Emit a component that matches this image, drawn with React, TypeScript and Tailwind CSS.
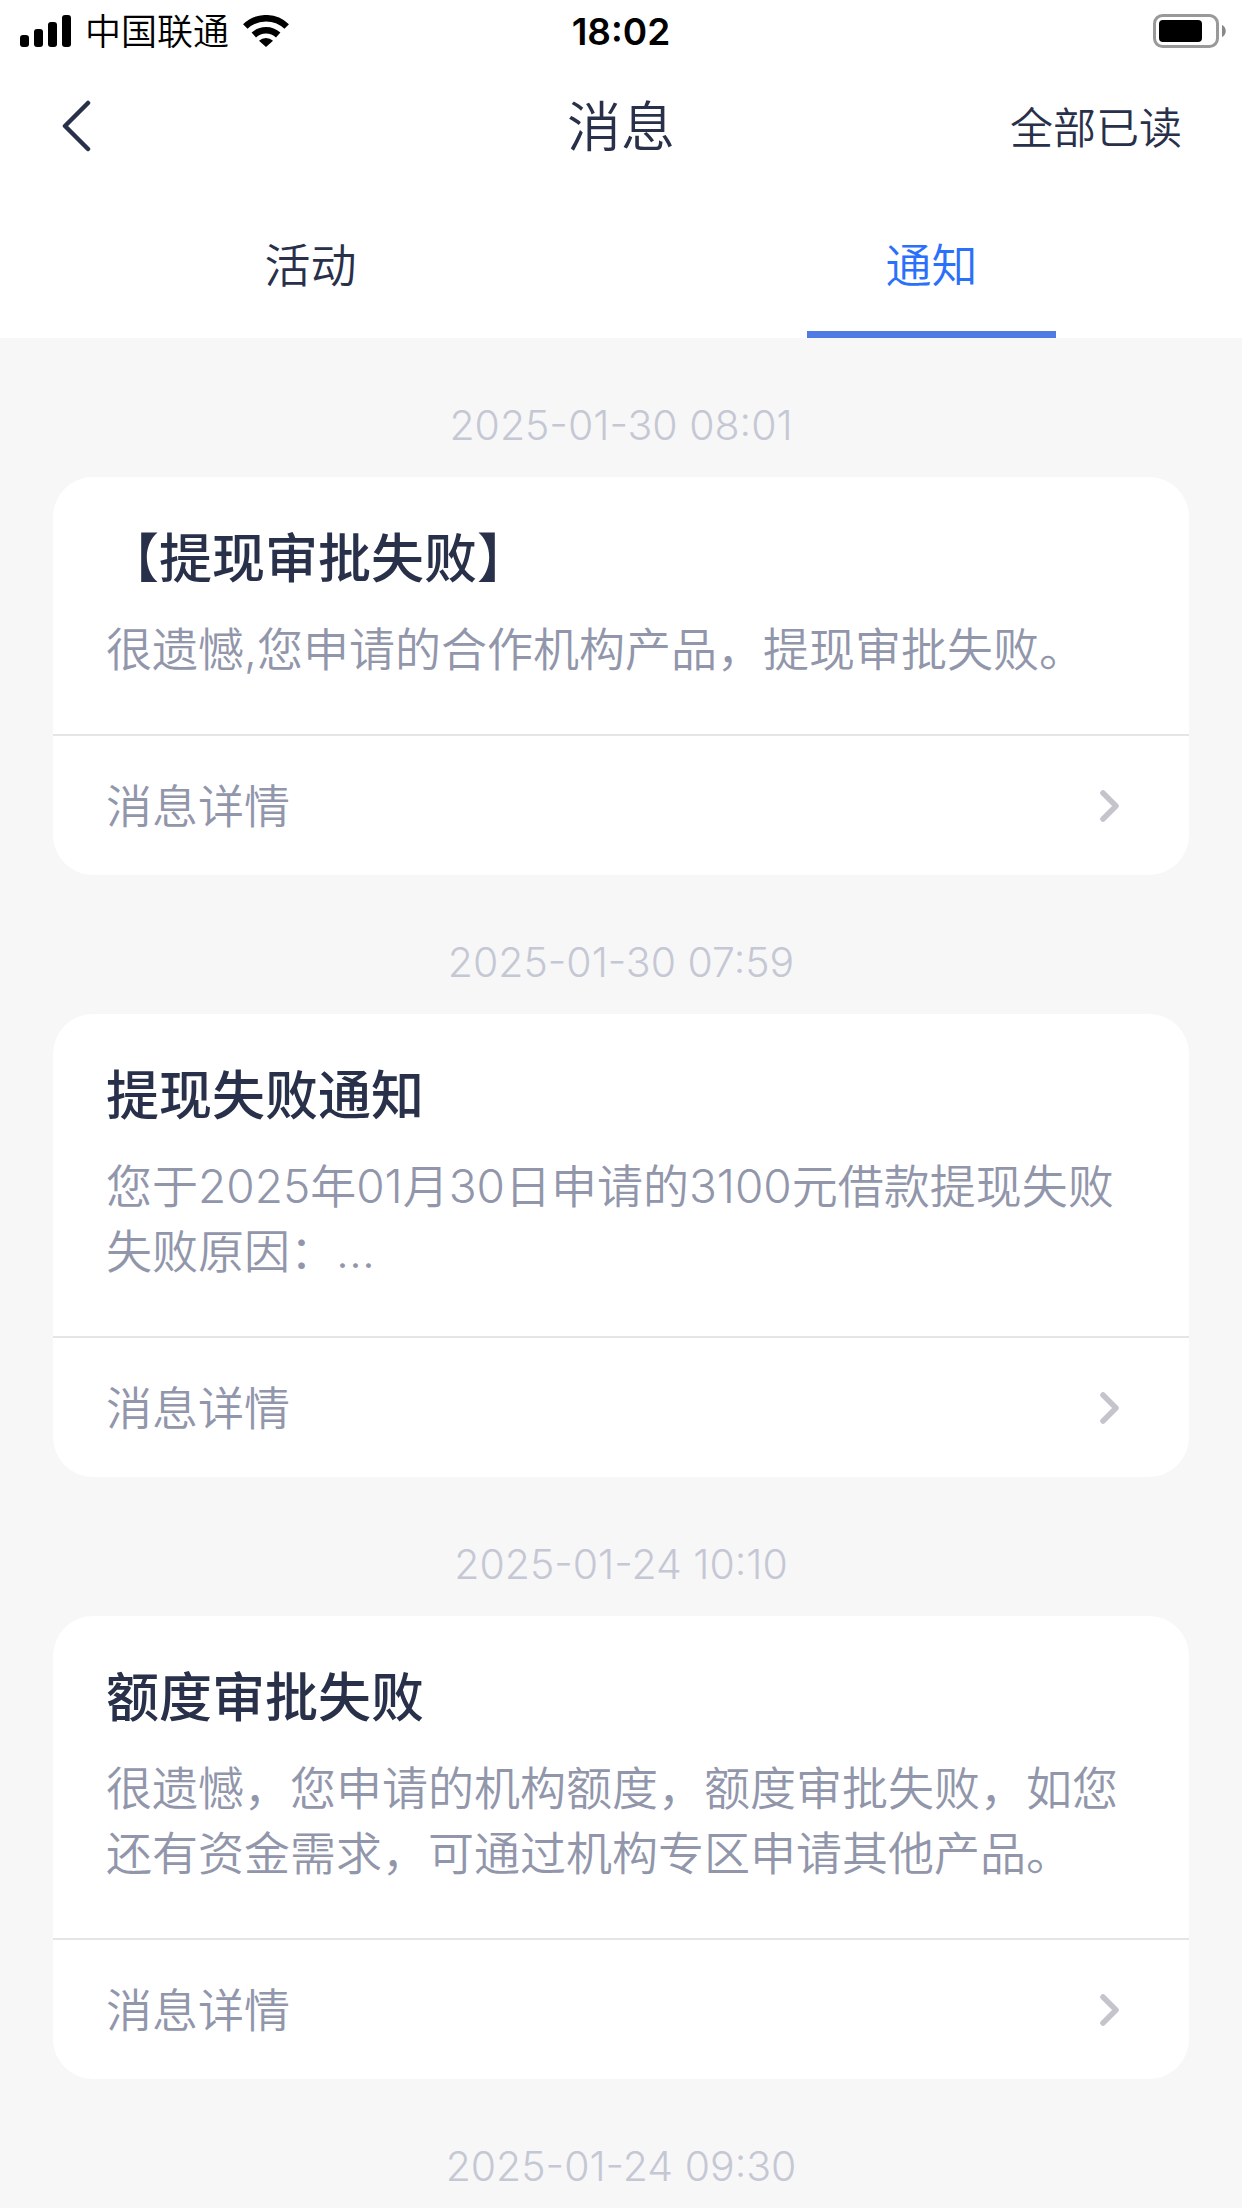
import { useState } from 'react';

type Message = {
  time: string;
  title: string;
  body: string;
};

const tabs = ['活动', '通知'];

const messages: Message[] = [
  {
    time: '2025-01-30 08:01',
    title: '【提现审批失败】',
    body: '很遗憾,您申请的合作机构产品，提现审批失败。',
  },
  {
    time: '2025-01-30 07:59',
    title: '提现失败通知',
    body: '您于2025年01月30日申请的3100元借款提现失败\n失败原因：…',
  },
  {
    time: '2025-01-24 10:10',
    title: '额度审批失败',
    body: '很遗憾，您申请的机构额度，额度审批失败，如您还有资金需求，可通过机构专区申请其他产品。',
  },
];

function StatusBar() {
  return (
    <div className="grid h-[62px] grid-cols-3 items-center px-4 text-black">
      <div className="flex items-center pl-1">
        <svg className="h-8 w-[51px]" viewBox="0 0 51 32" fill="currentColor">
          <rect x="0" y="20" width="9" height="12" rx="3" />
          <rect x="14" y="14" width="9" height="18" rx="3" />
          <rect x="28" y="7" width="9" height="25" rx="3" />
          <rect x="42" y="0" width="9" height="32" rx="3" />
        </svg>
        <span className="ml-3.5 pt-0.5 text-[36px] leading-none">中国联通</span>
        <svg className="ml-3.5 h-8 w-[46px]" viewBox="0 0 46 32" fill="none" stroke="currentColor" strokeWidth="6.5">
          <path d="M2.3 11.5A30 30 0 0 1 43.7 11.5" />
          <path d="M10.8 20A18 18 0 0 1 35.2 20" />
          <path d="M16 25.8A10 10 0 0 1 30 25.8L23 32Z" fill="currentColor" stroke="none" />
        </svg>
      </div>
      <span className="text-center font-[Inter] text-[37px] leading-none font-semibold">18:02</span>
      <svg className="h-[34px] w-[73px] justify-self-end" viewBox="0 0 73 34">
        <rect x="1.5" y="1.5" width="63" height="31" rx="8" fill="none" stroke="#999" strokeWidth="3" />
        <rect x="6" y="6" width="43" height="22" rx="4" fill="#000" />
        <path d="M69 11C74 13 74 21 69 23Z" fill="#888" />
      </svg>
    </div>
  );
}

function NavBar() {
  return (
    <div className="grid h-[128px] grid-cols-3 items-center px-[60px]">
      <button type="button" aria-label="返回" className="justify-self-start">
        <svg className="h-[52px] w-8" viewBox="0 0 32 52" fill="none" stroke="currentColor" strokeWidth="4.5" strokeLinecap="round" strokeLinejoin="round">
          <path d="M28 3L5 26L28 49" />
        </svg>
      </button>
      <h1 className="pt-1 text-center text-[54px] leading-none">消息</h1>
      <button type="button" className="justify-self-end pt-1 text-[43px] leading-none">
        全部已读
      </button>
    </div>
  );
}

function Timestamp({ value }: { value: string }) {
  return (
    <time className="flex h-[139px] items-center justify-center pt-9 font-[Inter] text-[41px] leading-none font-light text-[#c5c8d4]">
      {value}
    </time>
  );
}

function MessageCard({ message }: { message: Message }) {
  return (
    <article>
      <Timestamp value={message.time} />
      <div className="overflow-hidden rounded-[40px] bg-white">
        <div className="px-[53px] pt-[42px] pb-[52px]">
          <h2 className="text-[53px] leading-[80px] font-medium text-[#28304a]">{message.title}</h2>
          <p className="mt-[18px] text-[46px] leading-[65px] whitespace-pre-line text-[#9196ab]">{message.body}</p>
        </div>
        <a href="#detail" className="flex h-[141px] items-center justify-between border-t-2 border-[#e5e5e7] pr-[67px] pl-[53px] text-[46px] leading-none text-[#9196ab]">
          消息详情
          <svg className="h-9 w-6" viewBox="0 0 24 36" fill="none" stroke="#c3c4cc" strokeWidth="5.5" strokeLinecap="round" strokeLinejoin="round">
            <path d="M5 5L18 18L5 31" />
          </svg>
        </a>
      </div>
    </article>
  );
}

export default function App() {
  const [active, setActive] = useState('通知');

  return (
    <div className="flex h-screen flex-col overflow-hidden bg-[#f7f7f7] font-[Inter,'Noto_Sans_CJK_SC',sans-serif] font-[350] text-[#28304a]">
      <header className="shrink-0 bg-white">
        <StatusBar />
        <NavBar />
        <div role="tablist" className="grid h-[148px] grid-cols-2">
          {tabs.map((tab) => (
            <button
              key={tab}
              type="button"
              role="tab"
              aria-selected={tab === active}
              onClick={() => setActive(tab)}
              className={
                tab === active
                  ? 'flex flex-col items-center text-[46px] text-[#2b70fa]'
                  : 'flex flex-col items-center text-[46px]'
              }
            >
              <span className="flex flex-1 items-center pt-2 leading-none">{tab}</span>
              <span className={tab === active ? 'h-[7px] w-2/5 bg-[#517be4]' : 'h-[7px] w-2/5'} />
            </button>
          ))}
        </div>
      </header>
      <main className="min-h-0 flex-1 overflow-y-auto px-[53px] [scrollbar-width:none]">
        {messages.map((message) => (
          <MessageCard key={message.time} message={message} />
        ))}
        <Timestamp value="2025-01-24 09:30" />
      </main>
    </div>
  );
}
